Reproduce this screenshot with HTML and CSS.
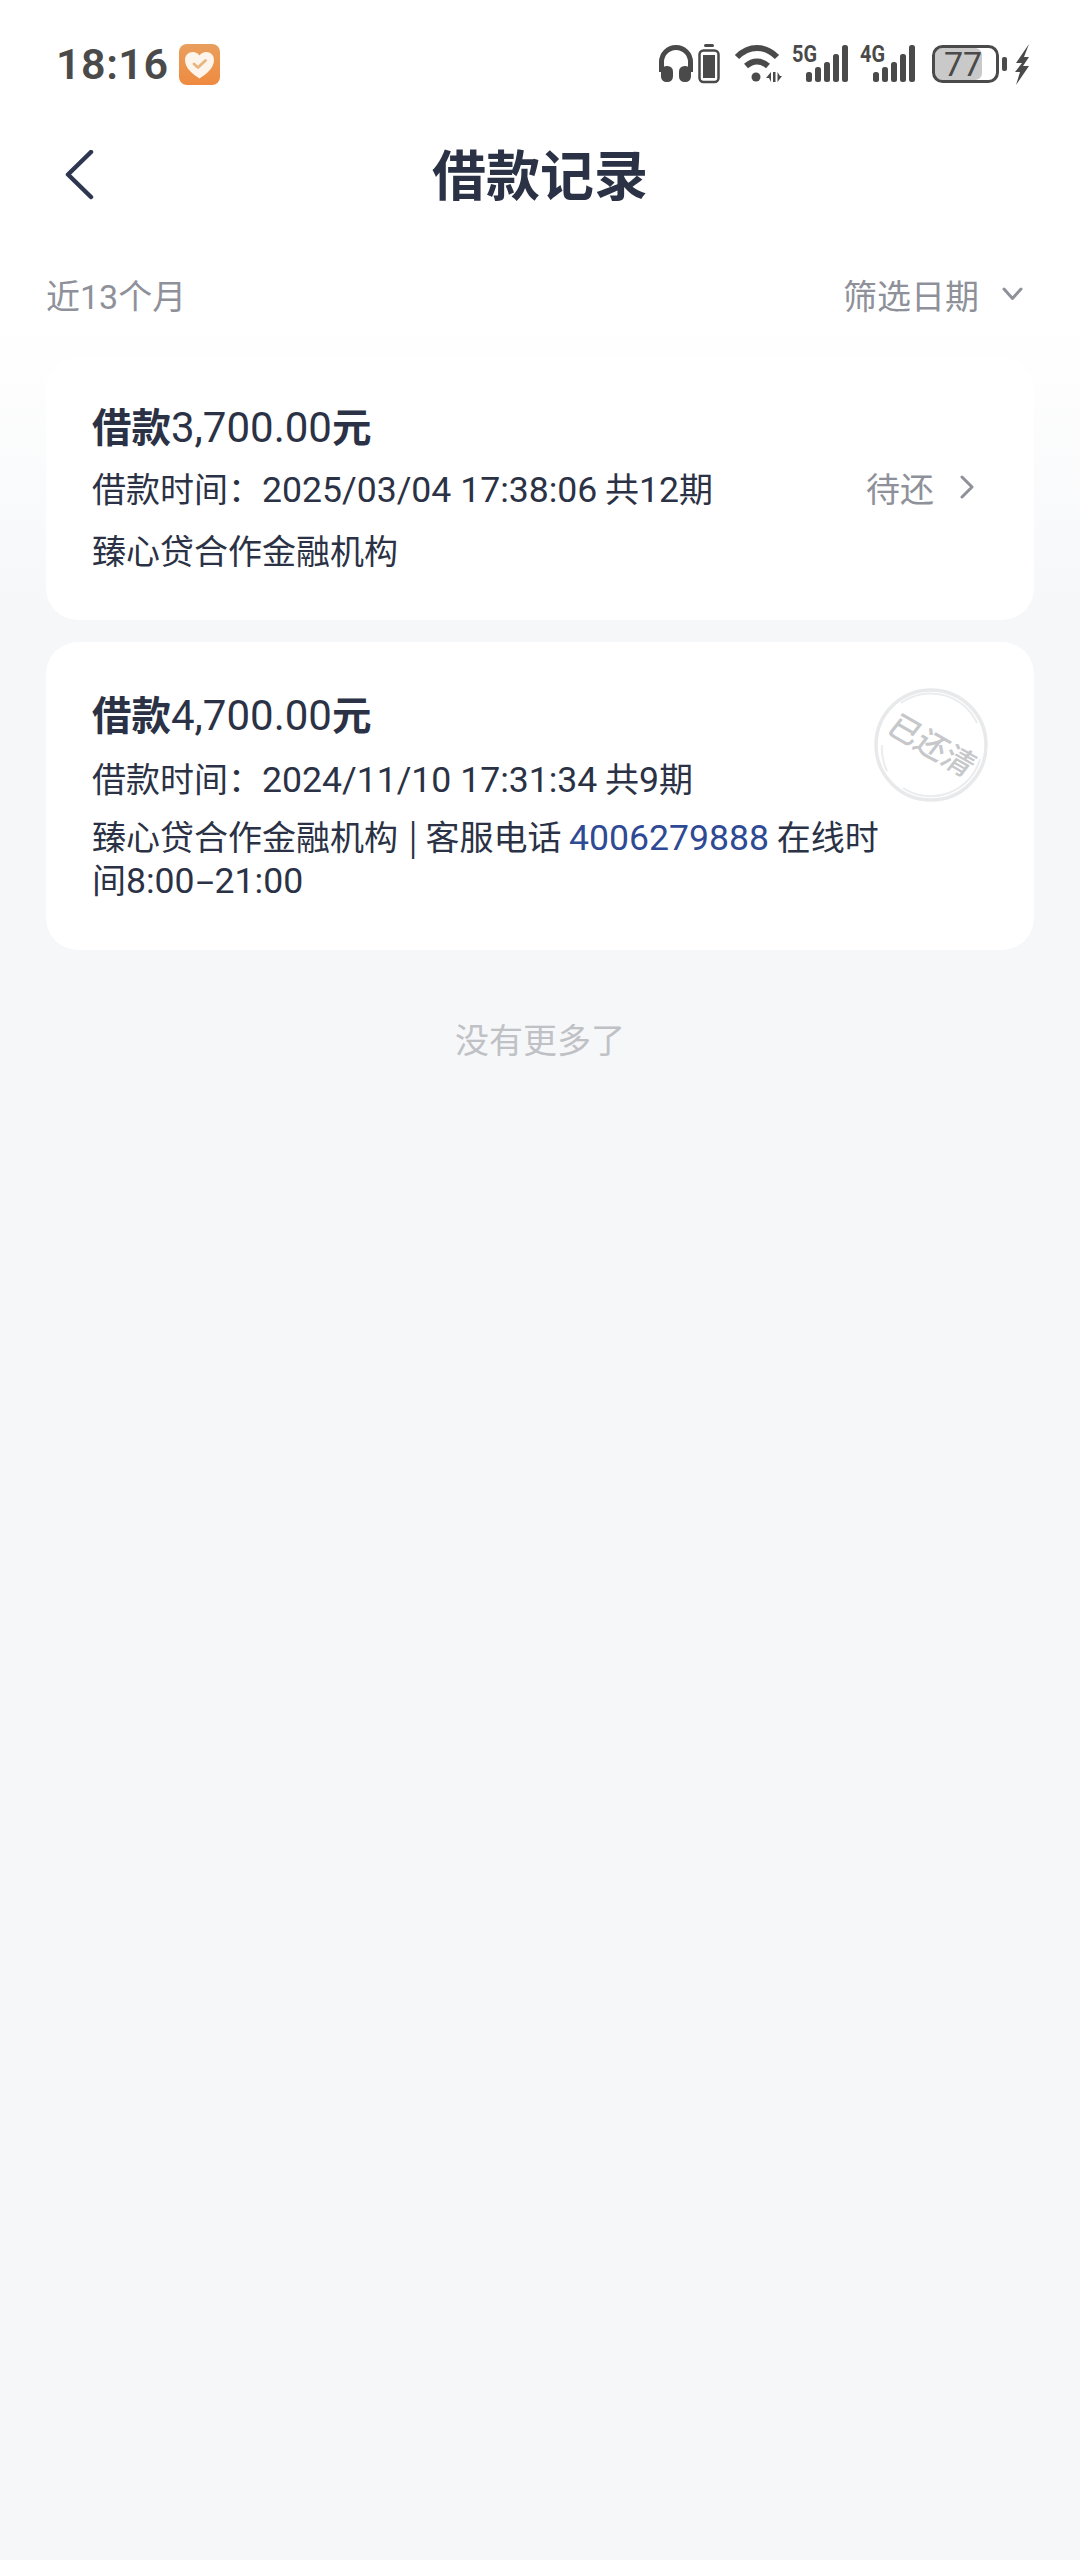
FILE: index.html
```html
<!DOCTYPE html>
<html lang="zh">
    <head>
        <meta charset="utf-8">
        <title>借款记录</title>
        <link rel="stylesheet" href="styles.css">
    </head>
    <body>
        <header class="statusBar">
            <div class="statusLeft">
                <span class="clock">18:16</span>
                <svg class="appIcon" viewBox="0 0 41 41">
                    <defs>
                        <linearGradient id="appBg" x1="0" y1="0" x2="0" y2="1">
                            <stop offset="0" stop-color="#e99f5c"/>
                            <stop offset="1" stop-color="#ef8a40"/>
                        </linearGradient>
                    </defs>
                    <rect width="41" height="41" rx="8" fill="url(#appBg)"/>
                    <path d="M20.500 34.500C14 30 6 24.500 6 16C6 11 9.500 8 13.800 8C16.500 8 19 9.300 20.500 11.500C22 9.300 24.500 8 27.200 8C31.500 8 35 11 35 16C35 24.500 27 30 20.500 34.500Z" fill="#fdf5ec"/>
                    <path d="M15 20L19 23.500L26.500 16.500" fill="none" stroke="#e8b57e" stroke-width="2.800" stroke-linecap="round" stroke-linejoin="round"/>
                </svg>
            </div>
            <svg class="statusIcons" viewBox="655 40 380 48">
                <g fill="none" stroke="#4a4a4a">
                    <path d="M661.500 72V62A14.500 14.500 0 0 1 690.500 62V72" stroke-width="5"/>
                    <rect x="699.500" y="50.500" width="19" height="31.500" rx="4" stroke-width="2.500"/>
                    <path d="M737 57C749 45 765 45 777 57" stroke-width="6"/>
                    <path d="M746 66C753 60 761 60 768 66" stroke-width="6"/>
                </g>
                <g fill="#4a4a4a">
                    <rect x="661" y="66" width="12" height="16" rx="5.500"/>
                    <rect x="679" y="66" width="12" height="16" rx="5.500"/>
                    <rect x="704" y="44" width="10" height="3" rx="1.500"/>
                    <rect x="703" y="55" width="12" height="23"/>
                    <circle cx="756" cy="77" r="4.500"/>
                    <path d="M771 82V72L766 78H769Z M773 72H775.500V82H773Z M777.500 72V82L782 76H780Z"/>
                    <rect x="806" y="72" width="6" height="10" rx="2.500"/>
                    <rect x="815" y="67" width="6" height="15" rx="2.500"/>
                    <rect x="824" y="62" width="6" height="20" rx="2.500"/>
                    <rect x="833" y="54" width="6" height="28" rx="2.500"/>
                    <rect x="842" y="45" width="6" height="37" rx="2.500"/>
                    <rect x="873" y="72" width="6" height="10" rx="2.500"/>
                    <rect x="882" y="67" width="6" height="15" rx="2.500"/>
                    <rect x="891" y="62" width="6" height="20" rx="2.500"/>
                    <rect x="900" y="54" width="6" height="28" rx="2.500"/>
                    <rect x="909" y="45" width="6" height="37" rx="2.500"/>
                    <rect x="1002" y="57" width="5" height="14" rx="2"/>
                    <path d="M1029 44L1016 63H1022L1015 72H1020L1016 85L1029 66H1023L1029 57H1024Z"/>
                </g>
                <rect x="935" y="48" width="47" height="32" rx="7" fill="#c9c9c9"/>
                <rect x="933.500" y="46.500" width="64" height="35" rx="9" fill="none" stroke="#4a4a4a" stroke-width="3"/>
                <text class="batteryText" x="963" y="76">77</text>
                <text class="netText" x="792" y="62" textLength="25" lengthAdjust="spacingAndGlyphs">5G</text>
                <text class="netText" x="860" y="62" textLength="25" lengthAdjust="spacingAndGlyphs">4G</text>
            </svg>
        </header>

        <nav class="titleBar">
            <svg class="backIcon" viewBox="0 0 30 50">
                <path d="M27 2L4 24.500L27 47" fill="none" stroke="#2f3650" stroke-width="4.500" stroke-linecap="round" stroke-linejoin="round"/>
            </svg>
            <h1>借款记录</h1>
        </nav>

        <section class="filterRow">
            <span>近<span class="num">13</span>个月</span>
            <span class="filterDate">
                筛选日期
                <svg class="downIcon" viewBox="0 0 21 14">
                    <path d="M2 2L10.500 11.500L19 2" fill="none" stroke="#8e9199" stroke-width="3" stroke-linecap="round" stroke-linejoin="round"/>
                </svg>
            </span>
        </section>

        <main class="records">
            <article class="card">
                <h2>借款<span class="amount">3,700.00</span>元</h2>
                <div class="infoRow">
                    <p>借款时间<span class="colon">：</span><span class="num">2025/03/04 17:38:06</span> 共<span class="num">12</span>期</p>
                    <span class="status">
                        待还
                        <svg class="rightIcon" viewBox="0 0 14 24">
                            <path d="M2 2L12 12L2 22" fill="none" stroke="#8e9199" stroke-width="3" stroke-linecap="round" stroke-linejoin="round"/>
                        </svg>
                    </span>
                </div>
                <p class="org">臻心贷合作金融机构</p>
            </article>

            <article class="card cardTall">
                <h2>借款<span class="amount">4,700.00</span>元</h2>
                <div class="infoRow">
                    <p>借款时间<span class="colon">：</span><span class="num">2024/11/10 17:31:34</span> 共<span class="num">9</span>期</p>
                </div>
                <p class="org">臻心贷合作金融机构<span class="sep"> | </span>客服电话 <span class="phone num">4006279888</span> 在线时间<span class="num">8:00<span class="dash">-</span>21:00</span></p>
                <div class="stamp">
                    <svg class="stampRings" viewBox="0 0 116 116">
                        <circle cx="58" cy="58" r="55" fill="none" stroke="#e8e9eb" stroke-width="3.500"/>
                        <path d="M28 16A51 51 0 0 1 104 36M107 72A51 51 0 0 1 30 101M14 84A51 51 0 0 1 9 58" fill="none" stroke="#ebecee" stroke-width="2"/>
                    </svg>
                    <span class="stampText">已还清</span>
                </div>
            </article>
        </main>

        <footer class="noMore">没有更多了</footer>
    </body>
</html>
```

FILE: styles.css
```css
*{
    box-sizing: border-box;
}
body{
    margin: 0;
    width: 1080px;
    height: 2560px;
    overflow: hidden;
    font-family: "Noto Sans CJK SC", Roboto, sans-serif;
    font-size: 34px;
    color: #2b3245;
    background: linear-gradient(#ffffff 0, #ffffff 320px, #f6f7f9 620px);
}
h1, h2, p{
    margin: 0;
    font-weight: normal;
}
.num{
    font-family: Roboto, "Noto Sans CJK SC", sans-serif;
    font-size: 35.600px;
    line-height: 1;
}
.colon{
    font-family: "Noto Sans CJK TC", sans-serif;
}

.statusBar{
    display: flex;
    justify-content: space-between;
    align-items: center;
    height: 48px;
    margin-top: 40px;
    padding: 0 45px 0 56px;
}
.statusLeft{
    display: flex;
    align-items: center;
    gap: 11px;
}
.clock{
    font-family: Roboto, sans-serif;
    font-size: 43px;
    font-weight: 600;
    letter-spacing: 0.500px;
    color: #4a4a4a;
}
.appIcon{
    width: 41px;
    height: 41px;
}
.statusIcons{
    width: 380px;
    height: 48px;
}
.batteryText{
    font-family: Roboto, sans-serif;
    font-size: 34px;
    fill: #4a4a4a;
    text-anchor: middle;
}
.netText{
    font-family: Roboto, sans-serif;
    font-size: 24px;
    font-weight: 700;
    fill: #4a4a4a;
}

.titleBar{
    position: relative;
    display: flex;
    justify-content: center;
    align-items: center;
    height: 80px;
    margin-top: 44px;
}
.titleBar h1{
    font-size: 54px;
    font-weight: 700;
    color: #2b3245;
}
.backIcon{
    position: absolute;
    left: 64px;
    top: 18px;
    width: 30px;
    height: 50px;
}

.filterRow{
    display: flex;
    justify-content: space-between;
    align-items: center;
    height: 50px;
    margin-top: 57px;
    padding: 0 46px;
    color: #8e9199;
}
.filterRow .num{
    font-size: 34px;
}
.filterDate{
    display: flex;
    align-items: center;
    gap: 23px;
    margin-right: 11px;
}
.downIcon{
    width: 21px;
    height: 14px;
}

.records{
    display: flex;
    flex-direction: column;
    gap: 22px;
    margin-top: 38px;
    padding: 0 46px;
}
.card{
    position: relative;
    padding: 43px 46px 0;
    background: #ffffff;
    border-radius: 32px;
    min-height: 263px;
}
.card h2{
    font-size: 39.500px;
    line-height: 50px;
    font-weight: 700;
}
.amount{
    font-family: Roboto, sans-serif;
    font-size: 42px;
    font-weight: 400;
}
.infoRow{
    display: flex;
    justify-content: space-between;
    align-items: center;
    height: 50px;
    margin-top: 9px;
}
.status{
    display: flex;
    align-items: center;
    gap: 26px;
    color: #8e9199;
    margin-right: 14px;
}
.rightIcon{
    width: 14px;
    height: 24px;
}
.org{
    margin-top: 15px;
    line-height: 45px;
}
.cardTall{
    min-height: 308px;
    padding-top: 46px;
}
.cardTall .infoRow{
    margin-top: 11px;
}
.cardTall .org{
    margin-top: 12px;
    max-width: 802px;
    line-height: 43px;
}
.sep{
    margin-left: 3px;
}
.dash{
    display: inline-block;
    width: 20px;
    text-align: center;
    transform: scaleX(1.800);
}
.phone{
    color: #2f4a94;
}
.stamp{
    position: absolute;
    left: 827px;
    top: 45px;
    width: 116px;
    height: 116px;
    display: flex;
    justify-content: center;
    align-items: center;
}
.stampRings{
    position: absolute;
    inset: 0;
}
.stampText{
    font-size: 31px;
    font-weight: 500;
    color: #c6c7ca;
    white-space: nowrap;
    transform: translate(2px, -2px) rotate(30deg) skewX(-8deg);
}

.noMore{
    margin-top: 64px;
    text-align: center;
    line-height: 50px;
    color: #bfc1c5;
}
```
